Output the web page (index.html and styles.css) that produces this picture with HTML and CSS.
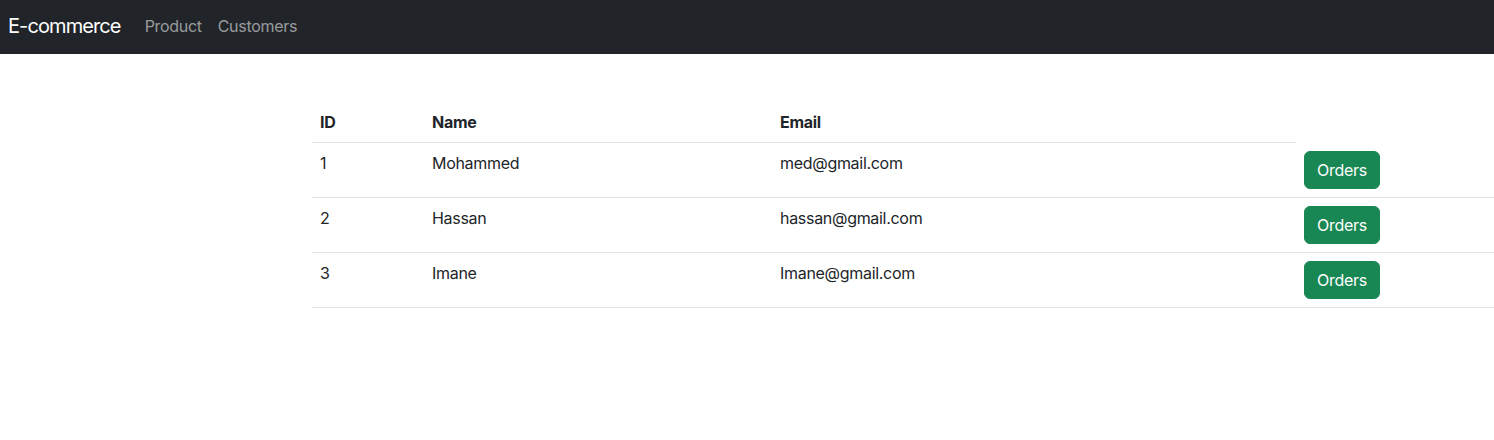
FILE: index.html
```html
<!DOCTYPE html>
<html lang="en">
<head>
<meta charset="utf-8">
<title>E-commerce</title>
<link rel="stylesheet" href="styles.css">
</head>
<body>
<nav class="navbar">
  <a class="brand" href="#">E-commerce</a>
  <ul class="nav-links">
    <li><a class="nav-link" href="#">Product</a></li>
    <li><a class="nav-link" href="#">Customers</a></li>
  </ul>
</nav>
<main class="content">
  <table class="table">
    <colgroup>
      <col class="c-id"><col class="c-name"><col class="c-email"><col class="c-action">
    </colgroup>
    <thead>
      <tr><th>ID</th><th>Name</th><th>Email</th></tr>
    </thead>
    <tbody>
      <tr><td>1</td><td>Mohammed</td><td>med@gmail.com</td><td><button class="btn">Orders</button></td></tr>
      <tr><td>2</td><td>Hassan</td><td>hassan@gmail.com</td><td><button class="btn">Orders</button></td></tr>
      <tr><td>3</td><td>Imane</td><td>Imane@gmail.com</td><td><button class="btn">Orders</button></td></tr>
    </tbody>
  </table>
</main>
</body>
</html>
```
FILE: styles.css
```css
* { box-sizing: border-box; }
html, body { margin: 0; padding: 0; }
body {
  font-family: Inter, "Noto Sans", sans-serif;
  font-size: 16px;
  line-height: 24px;
  letter-spacing: -0.3px;
  color: #212529;
  background: #fff;
}
.navbar {
  display: flex;
  align-items: center;
  height: 54px;
  padding: 0 8px 3px;
  background: #212529;
}
.brand {
  font-size: 20px;
  line-height: 30px;
  letter-spacing: -0.9px;
  color: #fff;
  text-decoration: none;
  margin-right: 16px;
}
.nav-links {
  display: flex;
  list-style: none;
  margin: 0;
  padding: 0;
}
.nav-link {
  display: block;
  padding: 8px;
  color: rgba(255,255,255,0.55);
  text-decoration: none;
}
.content {
  padding: 48px 0 0 312px;
}
.table {
  border-collapse: collapse;
  table-layout: fixed;
  width: 1182px;
  vertical-align: top;
}
.c-id { width: 112px; }
.c-name { width: 348px; }
.c-email { width: 524px; }
.c-action { width: 198px; }
.table th, .table td {
  padding: 8px;
  text-align: left;
  vertical-align: top;
  border-bottom: 1px solid #dee2e6;
}
.table th { font-weight: 700; }
.btn {
  font-family: inherit;
  font-size: 16px;
  line-height: 24px;
  letter-spacing: -0.3px;
  padding: 6px 12px;
  border: 1px solid #198754;
  border-radius: 6px;
  background: #198754;
  color: #fff;
  cursor: pointer;
}
```
